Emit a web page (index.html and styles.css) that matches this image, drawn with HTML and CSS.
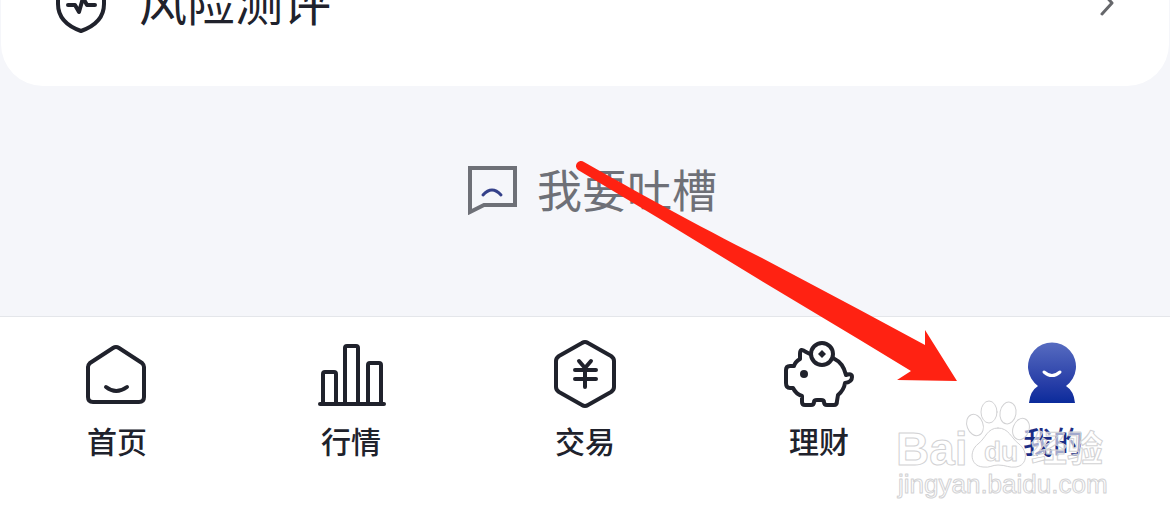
FILE: index.html
```
<!DOCTYPE html>
<html lang="zh-CN">
<head>
  <meta charset="UTF-8" />
  <meta name="viewport" content="width=device-width, initial-scale=1.0">
  <title>我的</title>
  <link rel="stylesheet" href="styles.css">
</head>
<body>
  <main>
    <div class="card">
      <a class="card-row" href="#risk">
        <svg class="shield" viewBox="0 0 60 60">
          <path d="M30 4 L50 11 Q53 12 53 15 V30 C53 43 44 52 30 57 C16 52 7 44 7 30 V15 Q7 12 10 11 Z" />
          <path d="M17 31 H24 L28 38 L32 24 L36 31 H44" />
        </svg>
        <span class="card-title">风险测评</span>
        <svg class="chevron" viewBox="0 0 16 28"><path d="M3 2 L13 13 L3 24" /></svg>
      </a>
    </div>

    <a class="feedback" href="#feedback">
      <svg class="bubble" viewBox="0 0 50 50">
        <path d="M3 3 H48 V40 H17 L3 47 Z" />
        <path class="frown" d="M16 30 Q25 20 34 30" />
      </svg>
      <span>我要吐槽</span>
    </a>
  </main>

  <nav>
    <a href="#home">
      <svg viewBox="0 0 70 70">
        <path d="M31 9 Q34 7 37 9 L60 24 Q62 26 62 28 V58 Q62 63 57 63 H11 Q6 63 6 58 V28 Q6 26 8 24 Z" />
        <path d="M24 48 Q34 56 45 48" />
      </svg>
      <span>首页</span>
    </a>
    <a href="#market">
      <svg viewBox="0 0 70 70">
        <path d="M7 65 V35 Q7 33 9 33 H18 Q20 33 20 35 V65" />
        <path d="M29 65 V9 Q29 7 31 7 H40 Q42 7 42 9 V65" />
        <path d="M52 65 V26 Q52 24 54 24 H63 Q65 24 65 26 V65" />
        <path d="M4 65 H68" />
      </svg>
      <span>行情</span>
    </a>
    <a href="#trade">
      <svg viewBox="0 0 70 70">
        <path d="M32 4 Q35 2 38 4 L61 17 Q64 19 64 22 V48 Q64 51 61 53 L38 66 Q35 68 32 66 L9 53 Q6 51 6 48 V22 Q6 19 9 17 Z" />
        <path d="M29 22 L35 29 L41 22 M25 31 H46 M25 40 H46 M35 29 V48" />
      </svg>
      <span>交易</span>
    </a>
    <a href="#wealth">
      <svg viewBox="0 0 70 70">
        <path d="M26 15 L22 13 Q16 8 16 15 V20 Q11 23 10 27 H6 Q2 27 2 31 V44 Q2 49 6 49 H9 Q12 55 18 57 V63 Q18 66 21 66 H27 Q30 66 30 63 Q30 61 33 61 H37 Q40 61 40 63 Q40 66 43 66 H50 Q53 66 53 62 L54 56 Q60 51 61 44 Q68 43 68 38 Q68 34 62 36 C60 28 57 23 49 19" />
        <circle cx="38" cy="15" r="11" />
        <path class="solid" d="M38 11 L42 15 L38 19 L34 15 Z" />
        <circle class="solid" cx="20" cy="35" r="4" />
      </svg>
      <span>理财</span>
    </a>
    <a class="active" href="#me">
      <svg viewBox="0 0 70 70">
        <defs>
          <linearGradient id="blue" x1="0" y1="4" x2="0" y2="64" gradientUnits="userSpaceOnUse">
            <stop offset="0" stop-color="#566bc0" />
            <stop offset="0.7" stop-color="#253ca6" />
            <stop offset="1" stop-color="#0b2b9b" />
          </linearGradient>
        </defs>
        <path class="person" d="M20 47 A24 24 0 1 1 48 47 Q56 52 57 64 H11 Q12 52 20 47 Z" />
        <path class="smile" d="M26 33 Q34 40 42 33" />
      </svg>
      <span>我的</span>
    </a>
  </nav>

  <!-- Pointer to the "my" tab -->
  <svg class="arrow" viewBox="0 0 400 240">
    <path d="M14 12 C60 38 130 77 190 107 L290 160 L355 195 V180 L387 231 L327 230 L341 221 L290 190 L190 130 L90 69 L8 20 A5 5 0 0 1 14 12 Z" />
  </svg>

  <!-- Watermark -->
  <svg class="watermark" viewBox="0 0 220 110">
    <g class="paw">
      <ellipse cx="85" cy="34" rx="8" ry="11" transform="rotate(-20 85 34)" />
      <ellipse cx="99" cy="21" rx="8" ry="11" />
      <ellipse cx="118" cy="22" rx="8" ry="11" transform="rotate(10 118 22)" />
      <ellipse cx="131" cy="38" rx="8" ry="11" transform="rotate(20 131 38)" />
      <path d="M108 37 C97 37 96 47 88 53 C79 60 80 75 93 76 C100 77 102 74 108 74 C116 74 119 77 126 76 C138 74 138 60 129 53 C121 47 119 37 108 37 Z" />
    </g>
    <text class="brand" x="6" y="74">Bai</text>
    <text class="du" x="94" y="70">du</text>
    <text class="brand-cn" x="141" y="71">经验</text>
    <text class="site" x="8" y="102">jingyan.baidu.com</text>
  </svg>
</body>
</html>
```

FILE: styles.css
```
* {
  box-sizing: border-box;
}
body {
  margin: 0;
  min-height: 100vh;
  display: flex;
  flex-direction: column;
  position: relative;
  overflow-x: hidden;
  font-family: "Noto Sans CJK SC", sans-serif;
  background-color: #f5f6fa;
  color: #20222c;
}
a {
  color: inherit;
  text-decoration: none;
}
svg {
  fill: none;
  stroke: #20222c;
  stroke-width: 4;
  stroke-linecap: round;
  stroke-linejoin: round;
}

/* The card runs up past the top of the screen */
.card {
  margin: -78px 1px 0;
  padding: 58px 50px;
  background-color: #fff;
  border-radius: 42px;
}
.card-row {
  display: flex;
  align-items: center;
  gap: 28px;
  height: 48px;
  font-size: 48px;
  line-height: 48px;
}
.card-title {
  flex: 1;
  padding-bottom: 8px;
}
.shield {
  width: 60px;
  height: 60px;
}
.chevron {
  width: 16px;
  height: 28px;
  margin-right: 4px;
  stroke: #66676b;
  stroke-width: 3;
}

.feedback {
  display: flex;
  justify-content: center;
  align-items: center;
  gap: 20px;
  padding: 79px 0 101px 14px;
  font-size: 45px;
  line-height: 48px;
  color: #6e7077;
}
.bubble {
  width: 50px;
  height: 50px;
  stroke: #6e7077;
  stroke-linejoin: miter;
}
.bubble .frown {
  stroke: #35418a;
  stroke-width: 3;
}
.feedback span {
  height: 50px;
}

/* Tab bar */
nav {
  flex: 1;
  display: grid;
  grid-template-columns: repeat(5, 1fr);
  padding: 22px 0 24px;
  background-color: #fff;
  border-top: 1px solid #e4e6ea;
}
nav a {
  display: flex;
  flex-direction: column;
  align-items: center;
  gap: 11px;
  font-size: 30px;
  font-weight: 500;
  line-height: 40px;
}
nav svg {
  width: 70px;
  height: 70px;
}
nav .solid {
  fill: #20222c;
  stroke: none;
}
nav .active {
  color: #1b2c84;
}
nav .person {
  fill: url(#blue);
  stroke: none;
}
nav .smile {
  stroke: #fff;
  stroke-width: 3;
}

.arrow {
  position: absolute;
  top: 150px;
  left: calc(50% - 15px);
  width: 400px;
  height: 240px;
  fill: #ff2212;
  stroke: none;
  pointer-events: none;
}

.watermark {
  position: absolute;
  top: 391px;
  right: 60px;
  width: 220px;
  height: 110px;
  fill: rgba(255, 255, 255, 0.6);
  stroke: #d2d2d4;
  stroke-width: 1;
  font-family: "Liberation Sans", "Noto Sans CJK SC", sans-serif;
  pointer-events: none;
}
.brand {
  font-size: 46px;
  font-weight: bold;
}
.du {
  font-size: 28px;
  font-weight: bold;
}
.brand-cn {
  font-size: 36px;
  font-weight: bold;
}
.site {
  font-size: 26px;
}
```
